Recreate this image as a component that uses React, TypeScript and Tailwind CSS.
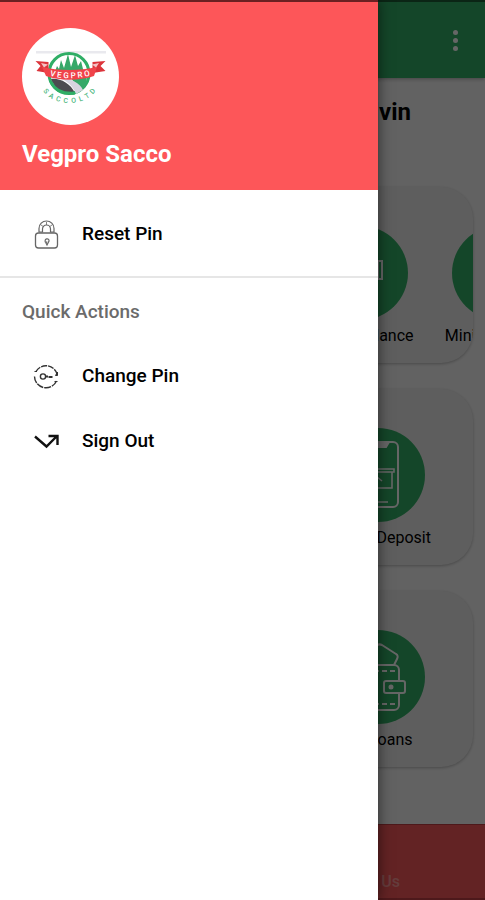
import type { ReactNode } from "react";

function VegproLogo() {
  return (
    <svg viewBox="0 0 97 97" className="size-full" role="img" aria-label="Vegpro Sacco logo">
      <rect x="14" y="23" width="70" height="2.500" fill="#e9e9ee" />
      <circle cx="47" cy="45.500" r="20" fill="#fff" stroke="#2fae66" strokeWidth="3" />
      <path
        d="M32 46l3-8 2 3 2-9 3 8 4-14 3 13 4-12 3 11 3-5 2 8 4 6-1 12-7 3-8-12-10-1z"
        fill="#36a869"
      />
      <path d="M29 51c9-1 19 4 24 14-10 4-20-3-24-14z" fill="#4c4b50" />
      <path d="M38 50c11 0 20 5 23 12l-7 4c-3-8-8-12-16-16z" fill="#d6d4e0" />
      <path d="M29 54c4 9 12 12 24 11" fill="none" stroke="#2fae66" strokeWidth="3" />
      <path d="M13.500 33l13 1v11l-12-2 4-5zM83.500 33l-13 1v11l13-2-5-5z" fill="#dc343b" />
      <path d="M20 39c16 4 38 4 55 0l-3 9c-15 5-34 5-48 0z" fill="#f0434a" />
      <path d="M19 35l7 1.500-4 3zM77 35l-7 1.500 4 3z" fill="#fff" opacity="0.700" />
      <path id="ribbonLine" d="M22 46c15 5.500 35 5.500 52 0" fill="none" />
      <path id="lowerLine" d="M18 57c8 24 50 24 59 0" fill="none" />
      <text fontSize="8" fontWeight="500" fill="#fff" className="font-['Roboto',sans-serif]">
        <textPath href="#ribbonLine" startOffset="50%" textAnchor="middle">
          {"V\u00a0E\u00a0G\u00a0P\u00a0R\u00a0O"}
        </textPath>
      </text>
      <text fontSize="7" fontWeight="500" fill="#4fb881" className="font-['Roboto',sans-serif]">
        <textPath href="#lowerLine" startOffset="50%" textAnchor="middle">
          {"S\u00a0\u00a0A\u00a0\u00a0C\u00a0\u00a0C\u00a0\u00a0O\u00a0\u00a0L\u00a0\u00a0T\u00a0\u00a0D"}
        </textPath>
      </text>
    </svg>
  );
}

function LockIcon() {
  return (
    <svg viewBox="0 0 28 30" className="h-[30px] w-7" fill="none" stroke="#666" aria-hidden="true">
      <rect x="3.500" y="13" width="22" height="15" rx="3" strokeWidth="1.300" />
      <path d="M7 12.500V8.500a7.500 7.500 0 0 1 15 0v4M10.500 12.500V9a4 4 0 0 1 8 0v3.500M7 12h3.500M18.500 12H22" strokeWidth="1.200" />
      <path d="M9 5l3 2M14.500 2v3M20 5l-3 2" strokeWidth="0.800" />
      <path d="M13.500 22.500c-2-4 4-5 3.500-1.500l-2 4-1-2 1-1.500" strokeWidth="1.200" />
    </svg>
  );
}

function ChangePinIcon() {
  return (
    <svg viewBox="0 0 28 28" className="size-7" fill="none" stroke="#333" strokeWidth="1.400" aria-hidden="true">
      <path d="M4 8.500A11.500 11.500 0 0 1 25 11" strokeDasharray="6 1" />
      <path d="M24.500 18A11.500 11.500 0 0 1 2.500 13.500" strokeDasharray="7 1" />
      <path d="M25.500 9v3.500h-2zM2.500 8.500H5M22.500 18.500h3" fill="#222" strokeWidth="1" />
      <circle cx="11" cy="13.500" r="2.600" />
      <path d="M14 13.500h2M16.500 14h4" strokeWidth="1.800" />
    </svg>
  );
}

function SignOutIcon() {
  return (
    <svg viewBox="0 0 28 28" className="size-7" fill="none" stroke="#111" strokeWidth="2.400" aria-hidden="true">
      <path d="M3 8.500 14.500 18.500 24.500 8.500M16.500 8h9v9" />
    </svg>
  );
}

function CardIcon() {
  return (
    <svg viewBox="0 0 48 72" className="h-[72px] w-12" fill="none" stroke="#fff" strokeWidth="2" aria-hidden="true">
      <rect x="4" y="24" width="41" height="18" />
      <path d="M41 24v18M4 48h24" />
    </svg>
  );
}

function PhoneIcon() {
  return (
    <svg viewBox="0 0 48 72" className="h-[72px] w-12" fill="none" stroke="#fff" strokeWidth="2" aria-hidden="true">
      <rect x="2" y="3" width="42" height="65" rx="5" />
      <path d="M13 3h22l-3 5H16z" fill="#fff" />
      <path d="M8 30h32v3H8zM10 33v16h28V33M23 45v-7l-5 4m5-4 5 4M14 63h20" strokeWidth="1.600" />
    </svg>
  );
}

function WalletIcon() {
  return (
    <svg viewBox="0 0 60 72" className="h-[72px] w-[60px]" fill="none" stroke="#fff" strokeWidth="2" aria-hidden="true">
      <path d="M6 22 29 4c2-1 3-1 5 0l14 9c2 1 2 3 1 5l-3 6" />
      <path d="M51 41V29a5 5 0 0 0-5-5H6v45h40a5 5 0 0 0 5-5V52" />
      <path d="M10 30h38M10 63h38" strokeDasharray="5 3" />
      <rect x="36" y="40" width="21" height="12" rx="2" />
      <circle cx="43" cy="46" r="1.500" fill="#fff" />
    </svg>
  );
}

function Service({ label, width, children }: { label: string; width?: string; children: ReactNode }) {
  return (
    <button type="button" className={`flex shrink-0 flex-col items-center gap-1 ${width ?? ""}`}>
      <span className="flex size-[94px] items-center justify-center rounded-full bg-[#34af66]">{children}</span>
      <span className="text-base leading-6 whitespace-nowrap">{label}</span>
    </button>
  );
}

const cardStyle =
  "flex h-44 items-start overflow-hidden rounded-[32px] bg-[#ececec] pt-[39px] shadow-[0_1px_3px_rgba(0,0,0,0.25)]";

function HomePage() {
  return (
    <div className="flex min-h-screen flex-col bg-[#f5f5f5] text-black">
      <header className="flex h-[78px] items-center justify-end border-t-2 border-[#1c5c36] bg-[#34af66] pr-4 shadow-[0_1px_4px_rgba(0,0,0,0.3)]">
        <button type="button" aria-label="More options" className="flex w-7 flex-col items-center gap-[3px]">
          <span className="size-[5px] rounded-full bg-white" />
          <span className="size-[5px] rounded-full bg-white" />
          <span className="size-[5px] rounded-full bg-white" />
        </button>
      </header>
      <main className="flex flex-1 flex-col px-3">
        <h1 className="mt-[18px] pr-[62px] text-right text-2xl font-bold">Good Morning, Kelvin</h1>
        <div className="mt-[59px] flex flex-col gap-[26px]">
          <section className={`${cardStyle} pl-1`}>
            <Service label="My Account" width="w-[138px]"><WalletIcon /></Service>
            <Service label="Transfer" width="w-[138px]"><PhoneIcon /></Service>
            <Service label="Check Balance" width="w-[138px]"><CardIcon /></Service>
            <Service label="Mini Statement" width="w-[138px]"><CardIcon /></Service>
          </section>
          <section className={`${cardStyle} justify-between px-[42px]`}>
            <Service label="Withdraw"><PhoneIcon /></Service>
            <Service label="Mobile Deposit"><PhoneIcon /></Service>
          </section>
          <section className={`${cardStyle} justify-between px-12`}>
            <Service label="Apply"><WalletIcon /></Service>
            <Service label="My Loans"><WalletIcon /></Service>
          </section>
        </div>
      </main>
      <footer className="flex h-[76px] items-end justify-end border-t border-b-2 border-t-[#c04044] border-b-[#c04044] bg-[#f7575a] pr-[85px] pb-1">
        <a href="#contact" className="text-base leading-6 font-medium text-white/40">Contact Us</a>
      </footer>
    </div>
  );
}

function MenuItem({ label, icon }: { label: string; icon: ReactNode }) {
  return (
    <button type="button" className="flex h-[65px] w-full items-center gap-[22px] pl-8 text-left text-[19px] font-medium text-black">
      <span className="flex w-7 justify-center">{icon}</span>
      {label}
    </button>
  );
}

function Drawer() {
  return (
    <aside className="absolute inset-y-0 left-0 w-[78%] bg-white shadow-[1px_0_12px_rgba(0,0,0,0.5)]">
      <div className="border-t-2 border-[#6b2022] bg-[#fd5659] px-[22px] pt-[26px] pb-5">
        <div className="size-[97px] overflow-hidden rounded-full bg-white">
          <VegproLogo />
        </div>
        <h2 className="mt-[13px] text-2xl font-bold text-white">Vegpro Sacco</h2>
      </div>
      <nav>
        <div className="border-b-2 border-[#e6e6e6] pt-3 pb-[9px]">
          <MenuItem label="Reset Pin" icon={<LockIcon />} />
        </div>
        <h3 className="mt-[22px] mb-5 px-[22px] text-[19px] leading-6 font-medium text-[#6b6b6b]">Quick Actions</h3>
        <MenuItem label="Change Pin" icon={<ChangePinIcon />} />
        <MenuItem label="Sign Out" icon={<SignOutIcon />} />
      </nav>
    </aside>
  );
}

export default function App() {
  return (
    <div className="relative min-h-screen overflow-hidden font-['Roboto',sans-serif]">
      <HomePage />
      <div className="absolute inset-0 bg-black/60" />
      <Drawer />
    </div>
  );
}
